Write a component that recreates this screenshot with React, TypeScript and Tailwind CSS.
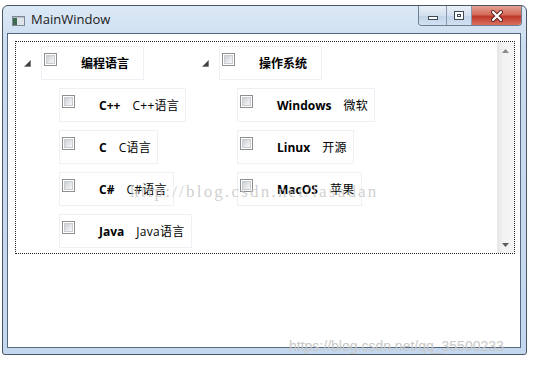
import React from "react";

function Check() {
  return (
    <div className="w-[13px] h-[13px] shrink-0 border border-[#8e8f8f] bg-white p-[1px]">
      <div className="w-full h-full border border-[#c9ccd1] bg-[linear-gradient(135deg,#cbcfd4_0%,#e4e6e9_55%,#f7f7f7_100%)]" />
    </div>
  );
}

function Item({ bold, normal, header }: { bold: string; normal?: string; header?: boolean }) {
  return (
    <div
      className={
        "flex h-[34px] border border-[#edf1f5] bg-white pl-[2px] " + (header ? "pr-[14px]" : "pr-[6px]")
      }
    >
      <div className="mt-[6px]">
        <Check />
      </div>
      <div className="ml-[24px] flex items-center gap-[12px] pt-[1px] text-[12px] leading-none text-black">
        <span className="font-bold">{bold}</span>
        {normal && <span className="tracking-[0.3px]">{normal}</span>}
      </div>
    </div>
  );
}

function Expander() {
  return (
    <div className="flex h-[34px] w-[25px] shrink-0 items-center pl-[8px]">
      <svg width="7" height="7" viewBox="0 0 7 7">
        <polygon points="6.5,0.5 6.5,6.5 0.5,6.5" fill="#3f3f3f" stroke="#6a6a6a" strokeWidth="0.6" />
      </svg>
    </div>
  );
}

function Column({
  title,
  items,
  width,
}: {
  title: string;
  items: [string, string][];
  width: string;
}) {
  return (
    <div className={"flex flex-col " + width}>
      <div className="flex items-start">
        <Expander />
        <Item bold={title} header />
      </div>
      <div className="mt-[8px] flex flex-col items-start gap-[8px] pl-[43px]">
        {items.map(([b, n]) => (
          <Item key={b} bold={b} normal={n} />
        ))}
      </div>
    </div>
  );
}

export default function App() {
  return (
    <div className="relative h-[365px] w-[543px] overflow-hidden bg-white pl-[2px] pt-[5px] font-['Open_Sans','Noto_Sans_CJK_SC',sans-serif]">
      {/* window */}
      <div className="flex h-[350px] w-[525px] flex-col rounded-t-[6px] rounded-b-[3px] border border-[#4a5664] bg-[linear-gradient(180deg,#dce9f6_0%,#cadcf0_12%,#c3d7ee_100%)]">
        {/* title bar */}
        <div className="flex h-[27px] shrink-0 items-center pl-[9px]">
          <svg width="13" height="10" viewBox="0 0 13 10" className="mt-[2px] shrink-0">
            <rect x="0" y="0" width="13" height="10" fill="#b6c0c8" />
            <rect x="0.5" y="0.5" width="12" height="9" fill="none" stroke="#7d8a95" />
            <rect x="1" y="2" width="4" height="7" fill="#3f6a52" />
            <rect x="5" y="2" width="7" height="7" fill="#dfe4e8" />
          </svg>
          <span className="ml-[6px] text-[13px] leading-none text-[#1b1b1b]">MainWindow</span>
          <div className="mr-[4px] ml-auto flex h-[20px] self-start overflow-hidden rounded-b-[4px] border border-t-0 border-[#6f7f93]">
            <div className="flex w-[28px] items-center justify-center border-r border-[#8a9aae] bg-[linear-gradient(180deg,#e9f0f8_0%,#d3e0ef_50%,#c2d3e8_51%,#d2e1f2_100%)]">
              <div className="mt-[5px] h-[4px] w-[10px] border border-[#3e4a58] bg-white" />
            </div>
            <div className="flex w-[25px] items-center justify-center border-r border-[#8a9aae] bg-[linear-gradient(180deg,#e9f0f8_0%,#d3e0ef_50%,#c2d3e8_51%,#d2e1f2_100%)]">
              <div className="flex h-[9px] w-[10px] items-center justify-center border border-[#3e4a58] bg-white">
                <div className="h-[3px] w-[4px] border border-[#3e4a58]" />
              </div>
            </div>
            <div className="flex w-[49px] items-center justify-center bg-[linear-gradient(180deg,#e3a194_0%,#d56a5a_45%,#c0392b_55%,#d8725e_100%)]">
              <svg width="14" height="12" viewBox="0 0 14 12">
                <path d="M3 2 L11 10 M11 2 L3 10" stroke="#5b2020" strokeWidth="4" strokeLinecap="round" />
                <path d="M3 2 L11 10 M11 2 L3 10" stroke="#ffffff" strokeWidth="2.2" strokeLinecap="round" />
              </svg>
            </div>
          </div>
        </div>

        {/* client */}
        <div className="mb-[6px] ml-[4px] mr-[5px] flex-1 border border-[#56687d] bg-white pl-[7px] pr-[5px] pt-[7px]">
          <div className="flex h-[213px] border border-dotted border-[#222]">
            <div className="flex flex-1 pt-[4px]">
              <Column
                title="编程语言"
                width="w-[178px]"
                items={[
                  ["C++", "C++语言"],
                  ["C", "C语言"],
                  ["C#", "C#语言"],
                  ["Java", "Java语言"],
                ]}
              />
              <Column
                title="操作系统"
                width="w-[200px]"
                items={[
                  ["Windows", "微软"],
                  ["Linux", "开源"],
                  ["MacOS", "苹果"],
                ]}
              />
            </div>
            <div className="flex w-[17px] flex-col justify-between bg-[linear-gradient(90deg,#e6e6e6_0%,#f3f3f3_40%,#f5f5f5_100%)]">
              <div className="flex h-[17px] items-center justify-center">
                <svg width="7" height="4" viewBox="0 0 7 4">
                  <polygon points="3.5,0 7,4 0,4" fill="#8a8a8a" />
                </svg>
              </div>
              <div className="flex h-[17px] items-center justify-center">
                <svg width="7" height="4" viewBox="0 0 7 4">
                  <polygon points="0,0 7,0 3.5,4" fill="#5c5c5c" />
                </svg>
              </div>
            </div>
          </div>
        </div>
      </div>

      {/* watermarks */}
      <div className="pointer-events-none absolute left-[130px] top-[179px] font-['Liberation_Serif',serif] text-[17px] tracking-[2.2px] text-[#c4c4c4]/80">
        http://blog.csdn.net/lasadan
      </div>
      <div className="pointer-events-none absolute left-[289px] top-[336px] font-['Liberation_Sans',sans-serif] text-[14px] text-[#c8c8c8]">
        https://blog.csdn.net/qq_35500233
      </div>
    </div>
  );
}
